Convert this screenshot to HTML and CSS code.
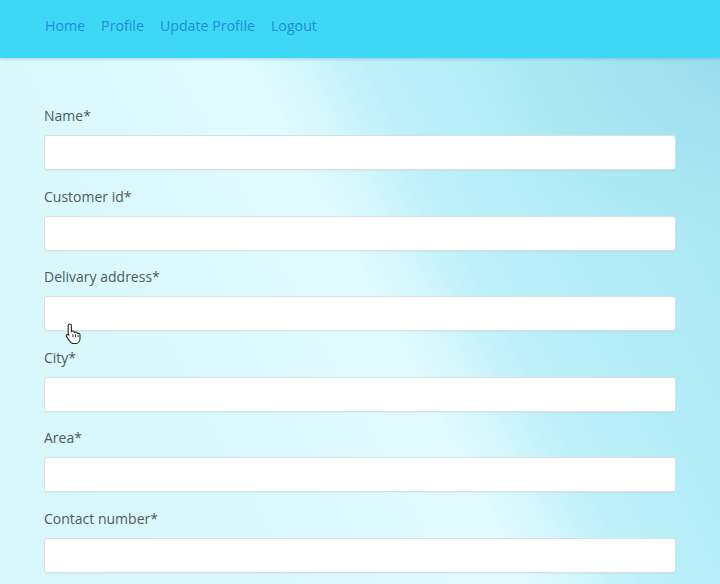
FILE: index.html
```html
<!DOCTYPE html>
<html>
<head>
<meta charset="utf-8">
<link rel="stylesheet" href="styles.css">
</head>
<body>
<nav class="nav">
  <a href="#">Home</a>
  <a href="#">Profile</a>
  <a href="#">Update Profile</a>
  <a href="#">Logout</a>
</nav>
<main class="main">
  <form class="form">
    <label class="label">Name*</label>
    <input class="input" type="text">
    <label class="label">Customer id*</label>
    <input class="input" type="text">
    <label class="label">Delivary address*</label>
    <div class="field-wrap">
      <input class="input" type="text">
      <svg class="cursor" width="17" height="22" viewBox="0 0 16 20">
        <path d="M4.5 1.5c.9 0 1.5.6 1.5 1.5v6.2c.2-.6.8-1 1.5-1 .8 0 1.4.6 1.4 1.4v.4c.2-.5.7-.9 1.3-.9.8 0 1.4.6 1.4 1.4v.5c.2-.4.7-.7 1.2-.7.8 0 1.3.6 1.3 1.4v3.6c0 2.6-2 4.7-4.6 4.7H8.2c-1.3 0-2.4-.6-3.200-1.6L1.4 13.4c-.5-.7-.3-1.5.3-1.9.6-.4 1.4-.3 1.9.3L3 12V3c0-.9.6-1.5 1.5-1.5z" fill="#fff" stroke="#222" stroke-width="1"/>
        <path d="M7.5 11v3M9.9 11.3v2.7M12.3 12v2" stroke="#222" stroke-width="0.9" fill="none"/>
      </svg>
    </div>
    <label class="label">City*</label>
    <input class="input" type="text">
    <label class="label">Area*</label>
    <input class="input" type="text">
    <label class="label">Contact number*</label>
    <input class="input" type="text">
  </form>
</main>
</body>
</html>
```
FILE: styles.css
```css
html, body {
  margin: 0;
  padding: 0;
  height: 100%;
  overflow: hidden;
}
body {
  font-family: "Open Sans", "Noto Sans", sans-serif;
  background: #c8f2fa;
}
.nav {
  height: 58px;
  box-sizing: border-box;
  background: #3fd7f6;
  display: flex;
  align-items: center;
  gap: 16px;
  padding: 0 0 8px 45px;
  box-shadow: 0 1px 3px rgba(0, 100, 140, 0.25);
  position: relative;
  z-index: 1;
}
.nav a {
  color: #1b8fd8;
  text-decoration: none;
  font-size: 14.2px;
}
.main {
  height: calc(100% - 58px);
  background:
    radial-gradient(ellipse 240px 180px at 720px 0px, rgba(140,210,230,0.5), rgba(140,210,230,0)),
    linear-gradient(62deg, #d6f7fc 0%, #dbf9fd 35%, #e3fbfe 52%, #d2f6fc 58%, #bff0f9 64%, #b2ecf7 76%, #aae7f4 100%);
  padding: 48px 44px 0 44px;
  box-sizing: border-box;
}
.form {
  display: flex;
  flex-direction: column;
  width: 632px;
}
.label {
  font-size: 14px;
  line-height: 20px;
  color: #4f595d;
  margin-bottom: 9px;
}
.input {
  height: 35px;
  box-sizing: border-box;
  border: 1px solid #d6dfe2;
  border-radius: 3px;
  background: #fff;
  margin: 0 0 16.5px 0;
  padding: 0 10px;
  font-size: 14px;
  box-shadow: 0 1px 1px rgba(0,0,0,0.04);
}
.field-wrap {
  position: relative;
  display: flex;
  flex-direction: column;
}
.cursor {
  position: absolute;
  left: 21px;
  top: 26px;
}
```
